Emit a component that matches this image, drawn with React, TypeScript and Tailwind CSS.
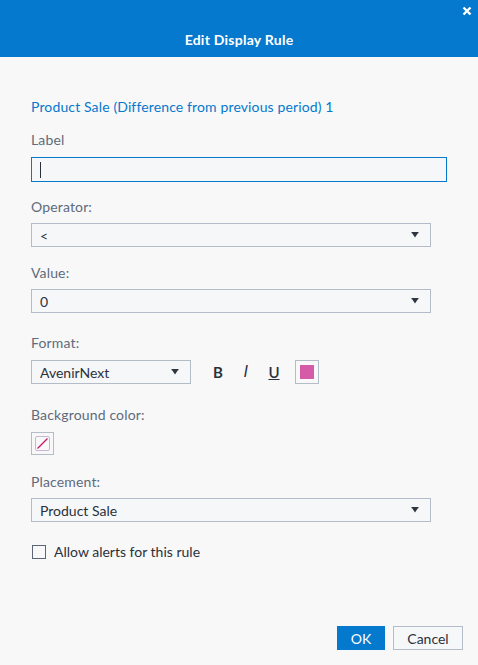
import React from "react";

const Arrow = () => (
  <svg width="8" height="6" viewBox="0 0 8 6" className="shrink-0">
    <rect x="0.5" y="0" width="7" height="1.2" fill="#2f3540" />
    <path d="M1 1 L7 1 L4 5.5 Z" fill="#2f3540" />
  </svg>
);

const Select = ({ value, w }: { value: string; w: string }) => (
  <div
    className={`${w} h-[24px] flex items-center justify-between pl-[8px] pr-[11px] border border-[#b4bcc8] bg-[#f5f7f9] text-[14px] text-[#2b313b]`}
  >
    <span>{value}</span>
    <Arrow />
  </div>
);

const Label = ({ children, mt }: { children: React.ReactNode; mt: string }) => (
  <div className={`${mt} h-[20px] leading-[20px] text-[14px] text-[#5e6b7c] mb-[6px] tracking-[0.15px]`}>{children}</div>
);

export default function App() {
  return (
    <div
      className="w-[478px] h-[665px] bg-[#f8f8f8] flex flex-col relative"
      style={{ fontFamily: "Lato, 'Noto Sans', sans-serif" }}
    >
      <div className="h-[57px] bg-[#0579cd] relative flex justify-center pt-[30px] shrink-0">
        <div className="text-white font-bold text-[14px] leading-[20px] tracking-[0.25px]">Edit Display Rule</div>
        <div className="absolute right-[6px] top-[6px] w-[10px] h-[10px]">
          <svg width="10" height="10" viewBox="0 0 10 10">
            <path d="M1.5 1.5 L8.5 8.5 M8.5 1.5 L1.5 8.5" stroke="white" strokeWidth="2.4" />
          </svg>
        </div>
      </div>

      <div className="flex flex-col px-[31px]">
        <div className="mt-[40px] h-[20px] leading-[20px] text-[14px] text-[#0579cd] tracking-[0.13px]">
          Product Sale (Difference from previous period) 1
        </div>

        <div className="mt-[13px] h-[20px] leading-[20px] text-[14px] text-[#5e6b7c] tracking-[0.15px]">Label</div>
        <div className="mt-[7px] w-[416px] h-[25px] border border-[#0579cd] bg-[#f5f7f9] flex items-center pl-[8px]">
          <div className="w-[1px] h-[16px] bg-[#2b313b]" />
        </div>

        <Label mt="mt-[15px]">Operator:</Label>
        <Select value="<" w="w-[400px]" />

        <Label mt="mt-[16px]">Value:</Label>
        <Select value="0" w="w-[400px]" />

        <Label mt="mt-[20px]">Format:</Label>
        <div className="mt-[1px] flex items-center h-[24px]">
          <Select value="AvenirNext" w="w-[160px]" />
          <div className="ml-[13px] flex items-center text-[15px] text-[#2b313b]">
            <span className="w-[28px] text-center font-bold">B</span>
            <span className="w-[28px] text-center italic" style={{ fontFamily: "'DejaVu Sans', sans-serif" }}>I</span>
            <span className="w-[28px] text-center underline font-semibold">U</span>
          </div>
          <div className="ml-[7px] w-[24px] h-[24px] border border-[#b4bcc8] flex items-center justify-center">
            <div className="w-[14px] h-[14px] bg-[#d55ba9]" />
          </div>
        </div>

        <Label mt="mt-[21px]">Background color:</Label>
        <div className="mt-[1px] w-[23px] h-[23px] border border-[#b4bcc8] flex items-center justify-center">
          <div className="w-[15px] h-[15px] border border-[#c8b6d6] rounded-[2px] relative">
            <svg width="13" height="13" viewBox="0 0 13 13" className="absolute left-0 top-0">
              <path d="M1.5 11.5 L11.5 1.5" stroke="#c2186b" strokeWidth="1.3" />
              <path d="M2.5 11.5 L11.5 2.5" stroke="#e58ab5" strokeWidth="0.6" />
            </svg>
          </div>
        </div>

        <Label mt="mt-[17px]">Placement:</Label>
        <Select value="Product Sale" w="w-[400px]" />

        <div className="mt-[23px] flex items-center h-[14px]">
          <div className="ml-[1px] w-[14px] h-[14px] border border-[#5a6578] bg-[#f8f8f8]" />
          <span className="ml-[8px] text-[14px] text-[#2b313b] leading-[14px]">Allow alerts for this rule</span>
        </div>
      </div>

      <div className="absolute left-0 right-0 top-[626px] flex justify-end gap-[8px] pr-[15px]">
        <div className="w-[48px] h-[24px] bg-[#0579cd] text-white text-[14px] flex items-center justify-center">OK</div>
        <div className="w-[70px] h-[24px] border border-[#b4bcc8] bg-[#f5f7f9] text-[#2b313b] text-[14px] flex items-center justify-center">
          Cancel
        </div>
      </div>
    </div>
  );
}
